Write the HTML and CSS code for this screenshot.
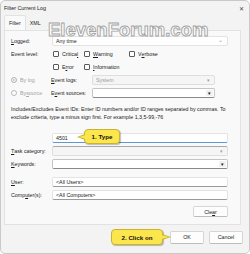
FILE: index.html
```html
<!DOCTYPE html>
<html lang="en">
<head>
  <meta charset="UTF-8">
  <meta name="viewport" content="width=device-width, initial-scale=1.0">
  <title>Filter Current Log</title>
  <link rel="stylesheet" href="styles.css">
</head>
<body>

  <div class="window">
    <div class="titlebar">
      <span class="title">Filter Current Log</span>
      <span class="close">&#x2715;</span>
    </div>

    <div class="tabs">
      <span class="tab active">Filter</span>
      <span class="tab">XML</span>
    </div>

    <div class="watermark">ElevenForum.com</div>

    <div class="panel">
      <div class="row">
        <span class="label"><u>L</u>ogged:</span>
        <div class="field select">Any time<span class="chev">&#x2304;</span></div>
      </div>

      <div class="row">
        <span class="label">Event level:</span>
        <div class="checks">
          <span class="check"><i class="box"></i>Critica<u>l</u></span>
          <span class="check"><i class="box"></i><u>W</u>arning</span>
          <span class="check"><i class="box"></i>V<u>e</u>rbose</span>
        </div>
      </div>

      <div class="row">
        <span class="label"></span>
        <div class="checks">
          <span class="check"><i class="box"></i>E<u>r</u>ror</span>
          <span class="check"><i class="box"></i><u>I</u>nformation</span>
        </div>
      </div>

      <div class="row sub">
        <span class="label dim"><i class="radio on"></i>By lo<u>g</u></span>
        <span class="sublabel"><u>E</u>vent logs:</span>
        <div class="field disabled">System<span class="arrow light">&#x25BE;</span></div>
      </div>

      <div class="row sub">
        <span class="label dim"><i class="radio"></i>By <u>s</u>ource</span>
        <span class="sublabel">E<u>v</u>ent sources:</span>
        <div class="field combo"><span class="btn">&#x25BE;</span></div>
      </div>

      <p class="desc">Includes/Excludes Event IDs: Enter ID numbers and/or ID ranges separated by commas. To exclude criteria, type a minus sign first. For example 1,3,5-99,-76</p>

      <div class="row ids">
        <span class="label"></span>
        <div class="field focused">4501</div>
        <div class="callout left">1. Type</div>
      </div>

      <div class="row">
        <span class="label"><u>T</u>ask category:</span>
        <div class="field disabled dark"><span class="arrow light">&#x25BE;</span></div>
      </div>

      <div class="row">
        <span class="label"><u>K</u>eywords:</span>
        <div class="field combo"><span class="btn">&#x25BE;</span></div>
      </div>

      <div class="row user">
        <span class="label"><u>U</u>ser:</span>
        <div class="field">&lt;All Users&gt;</div>
      </div>

      <div class="row">
        <span class="label">Comp<u>u</u>ter(s):</span>
        <div class="field">&lt;All Computers&gt;</div>
      </div>

      <div class="clear-row">
        <span class="button">Cle<u>a</u>r</span>
      </div>
    </div>

    <div class="footer">
      <div class="callout right">2. Click on</div>
      <span class="button big">OK</span>
      <span class="button big">Cancel</span>
    </div>
  </div>

</body>
</html>
```

FILE: styles.css
```css
/* Event Viewer filter dialog */
body {
  margin: 0;
  background-color: #ffffff;
  font-family: "Liberation Sans", Arial, sans-serif;
  font-size: 5.3px;
  color: #1a1a1a;
}

.window {
  position: relative;
  width: 248px;
  height: 252px;
  border: 1px solid #c9c9c9;
  border-radius: 5px;
  background-color: #f3f3f3;
  overflow: hidden;
}

.titlebar {
  display: flex;
  justify-content: space-between;
  align-items: center;
  height: 14px;
  padding: 0 5px 0 3px;
}

.title {
  font-size: 5.4px;
}

.close {
  font-size: 6px;
  color: #444;
}

.tabs {
  display: flex;
  height: 15px;
  margin-left: 3px;
}

.tab {
  display: flex;
  align-items: center;
  padding: 0 4px;
}

.tab.active {
  background-color: #f9f9f9;
  border: 1px solid #e2e2e2;
  border-bottom: none;
  border-radius: 2px 2px 0 0;
}

.watermark {
  position: absolute;
  z-index: 3;
  left: 47px;
  top: 18px;
  font-family: "Liberation Sans", Arial, sans-serif;
  font-weight: bold;
  font-size: 18.5px;
  white-space: nowrap;
  color: #ffffff;
  -webkit-text-stroke: 0.9px #a3a3a3;
  pointer-events: none;
}

.panel {
  position: relative;
  margin: 0 8px 0 3px;
  padding: 3px 12px 7px 6px;
  background-color: #f9f9f9;
  border: 1px solid #e2e2e2;
}

.row {
  position: relative;
  display: grid;
  grid-template-columns: 41px 1fr;
  align-items: center;
  height: 13px;
}

.row.sub {
  grid-template-columns: 40px 41px 1fr;
  padding-right: 13px;
}

.row.ids {
  height: 12px;
  margin-top: 11px;
}

.row.user {
  margin-top: 5px;
}

.label {
  display: flex;
  align-items: center;
  white-space: nowrap;
}

.dim {
  color: #a2a2a2;
}

.sublabel {
  white-space: nowrap;
}

.field {
  position: relative;
  display: flex;
  align-items: center;
  height: 10px;
  padding-left: 3px;
  background-color: #ffffff;
  border: 1px solid #e3e3e3;
  border-bottom-color: #9a9a9a;
  border-radius: 2px;
  box-sizing: border-box;
}

.field.select {
  border-bottom-color: #e3e3e3;
}

.field.focused {
  border-bottom: 1px solid #5b9bd5;
}

.field.disabled {
  background-color: #f5f5f5;
  border-color: #dedede;
  color: #9a9a9a;
}

.field.dark {
  border-top-color: #a8a8a8;
}

.field.combo {
  border-color: #c4c4c4;
  border-bottom-color: #8a8a8a;
}

.chev {
  position: absolute;
  right: 4px;
  top: 0;
  line-height: 6px;
  color: #9a9a9a;
  font-size: 6px;
}

.arrow {
  position: absolute;
  right: 4px;
  font-size: 5px;
}

.arrow.light {
  color: #a0a0a0;
}

.btn {
  position: absolute;
  right: 1px;
  top: 1px;
  width: 7px;
  height: 6px;
  display: flex;
  align-items: center;
  justify-content: center;
  background-color: #f1f1f1;
  font-size: 5px;
  color: #111;
}

.checks {
  display: grid;
  grid-template-columns: 31px 45px 1fr;
  padding-left: 1px;
}

.check {
  display: flex;
  align-items: center;
  white-space: nowrap;
}

.box {
  display: inline-block;
  width: 4px;
  height: 4px;
  margin-right: 3px;
  border: 1px solid #5a5a5a;
  border-radius: 1px;
  background-color: #ffffff;
}

.radio {
  display: inline-block;
  width: 4px;
  height: 4px;
  margin-right: 3px;
  border: 1px solid #b8b8b8;
  border-radius: 50%;
  background-color: #ffffff;
}

.radio.on {
  background-color: #c8c8c8;
  box-shadow: inset 0 0 0 1px #ffffff;
}

.desc {
  margin: 6px -8px 0 0;
  line-height: 8px;
}

.clear-row {
  display: flex;
  justify-content: flex-end;
  margin-top: 5px;
}

.button {
  display: flex;
  align-items: center;
  justify-content: center;
  width: 33px;
  height: 9px;
  background-color: #fdfdfd;
  border: 1px solid #d6d6d6;
  border-bottom-color: #bcbcbc;
  border-radius: 2px;
}

.footer {
  display: flex;
  justify-content: flex-end;
  align-items: center;
  gap: 5px;
  height: 24px;
  padding-right: 6px;
}

.button.big {
  width: 32px;
  height: 11px;
}

.callout {
  position: relative;
  display: flex;
  align-items: center;
  justify-content: center;
  background-color: #fbe64d;
  border: 1px solid #c9b430;
  border-radius: 4px;
  font-weight: bold;
  font-size: 6.2px;
  color: #111;
  box-shadow: 1px 1px 1px rgba(0, 0, 0, 0.25);
}

.callout.left {
  position: absolute;
  left: 73px;
  top: -3px;
  width: 34px;
  height: 13px;
}

.callout.right {
  width: 50px;
  height: 14px;
  margin-right: 2px;
}

.callout::before,
.callout::after {
  content: "";
  position: absolute;
  top: 50%;
  width: 0;
  height: 0;
  border-style: solid;
}

.callout.left::before {
  left: -8px;
  margin-top: -3px;
  border-width: 3px 8px 3px 0;
  border-color: transparent #c9b430 transparent transparent;
}

.callout.left::after {
  left: -6px;
  margin-top: -2px;
  border-width: 2px 7px 2px 0;
  border-color: transparent #fbe64d transparent transparent;
}

.callout.right::before {
  right: -9px;
  margin-top: -3px;
  border-width: 3px 0 3px 9px;
  border-color: transparent transparent transparent #c9b430;
}

.callout.right::after {
  right: -7px;
  margin-top: -2px;
  border-width: 2px 0 2px 8px;
  border-color: transparent transparent transparent #fbe64d;
}
```
